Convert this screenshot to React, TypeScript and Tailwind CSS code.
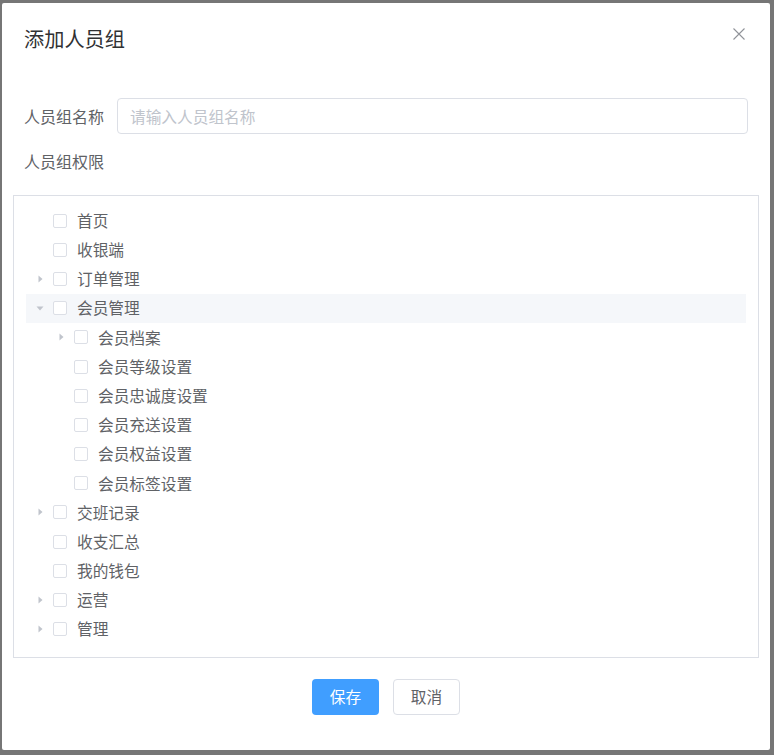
import React, { useState } from "react";

type Node = {
  label: string;
  children?: Node[];
  open?: boolean;
};

const tree: Node[] = [
  { label: "首页" },
  { label: "收银端" },
  { label: "订单管理", children: [{ label: "订单列表" }] },
  {
    label: "会员管理",
    open: true,
    children: [
      { label: "会员档案", children: [{ label: "会员列表" }] },
      { label: "会员等级设置" },
      { label: "会员忠诚度设置" },
      { label: "会员充送设置" },
      { label: "会员权益设置" },
      { label: "会员标签设置" },
    ],
  },
  { label: "交班记录", children: [{ label: "交班明细" }] },
  { label: "收支汇总" },
  { label: "我的钱包" },
  { label: "运营", children: [{ label: "活动" }] },
  { label: "管理", children: [{ label: "门店" }] },
];

const Caret = ({ open }: { open?: boolean }) => (
  <svg width="12" height="12" viewBox="0 0 12 12" className="shrink-0">
    {open ? (
      <polygon points="2.5,4.5 9.5,4.5 6,8.5" fill="#c0c4cc" />
    ) : (
      <polygon points="4.5,2.5 8.5,6 4.5,9.5" fill="#c0c4cc" />
    )}
  </svg>
);

const TreeRow = ({ node, level }: { node: Node; level: number }) => {
  const [open, setOpen] = useState(!!node.open);
  const [checked, setChecked] = useState(false);
  const hasKids = !!node.children?.length;

  return (
    <>
      <div
        className={
          "flex items-center h-[29.2px] cursor-pointer " +
          (node.open ? "bg-[#f5f7fa]" : "hover:bg-[#f5f7fa]")
        }
        style={{ paddingLeft: level * 21 }}
        onClick={() => hasKids && setOpen(!open)}
      >
        <span className="w-[27px] flex justify-center pl-[1px]">
          {hasKids ? <Caret open={open} /> : null}
        </span>
        <span
          onClick={(e) => {
            e.stopPropagation();
            setChecked(!checked);
          }}
          className={
            "w-[14px] h-[14px] rounded-[2px] border shrink-0 " +
            (checked ? "bg-[#409eff] border-[#409eff]" : "bg-white border-[#dcdfe6]")
          }
        />
        <span className="ml-[10px] text-[15.7px] text-[#606266]">{node.label}</span>
      </div>
      {hasKids && open &&
        node.children!.map((c) => <TreeRow key={c.label} node={c} level={level + 1} />)}
    </>
  );
};

export default function App() {
  return (
    <div
      className="w-[774px] h-[755px] bg-[#767676] pl-[2px] pt-[3px] pr-[4px] pb-[5px]"
      style={{ fontFamily: '"Microsoft YaHei", "Noto Sans CJK SC", "Noto Sans", sans-serif' }}
    >
      <div className="w-full h-full bg-white rounded-[2px] flex flex-col">
        {/* Header */}
        <div className="relative px-[22px] pt-[23px] h-[80px]">
          <span className="text-[20.2px] leading-[26px] text-[#303133]">添加人员组</span>
          <button className="absolute right-[24px] top-[24px] text-[#909399]">
            <svg width="14" height="14" viewBox="0 0 14 14">
              <path d="M1.5 1.5 L12.5 12.5 M12.5 1.5 L1.5 12.5" stroke="#909399" strokeWidth="1.1" />
            </svg>
          </button>
        </div>

        {/* Body */}
        <div className="flex flex-col px-[11px]">
          <div className="flex items-center h-[36px] mt-[15px] pl-[11px] pr-[11px]">
            <label className="w-[93px] text-[16px] text-[#606266]">人员组名称</label>
            <input
              placeholder="请输入人员组名称"
              className="flex-1 h-[36px] border border-[#dcdfe6] rounded-[4px] px-[12px] text-[15.7px] text-[#606266] placeholder:text-[#c0c4cc] outline-none"
            />
          </div>
          <div className="h-[36px] mt-[9px] pl-[11px] flex items-center text-[16px] text-[#606266]">
            人员组权限
          </div>

          <div className="mt-[16px] border border-[#dcdfe6] px-[12px] pt-[10px] pb-[13px] h-[463px]">
            {tree.map((n) => (
              <TreeRow key={n.label} node={n} level={0} />
            ))}
          </div>
        </div>

        {/* Footer */}
        <div className="flex justify-center gap-[14px] mt-[21px]">
          <button className="w-[67px] h-[36px] rounded-[4px] bg-[#409eff] text-white text-[15.7px]">
            保存
          </button>
          <button className="w-[67px] h-[36px] rounded-[4px] border border-[#dcdfe6] bg-white text-[#606266] text-[15.7px]">
            取消
          </button>
        </div>
      </div>
    </div>
  );
}
